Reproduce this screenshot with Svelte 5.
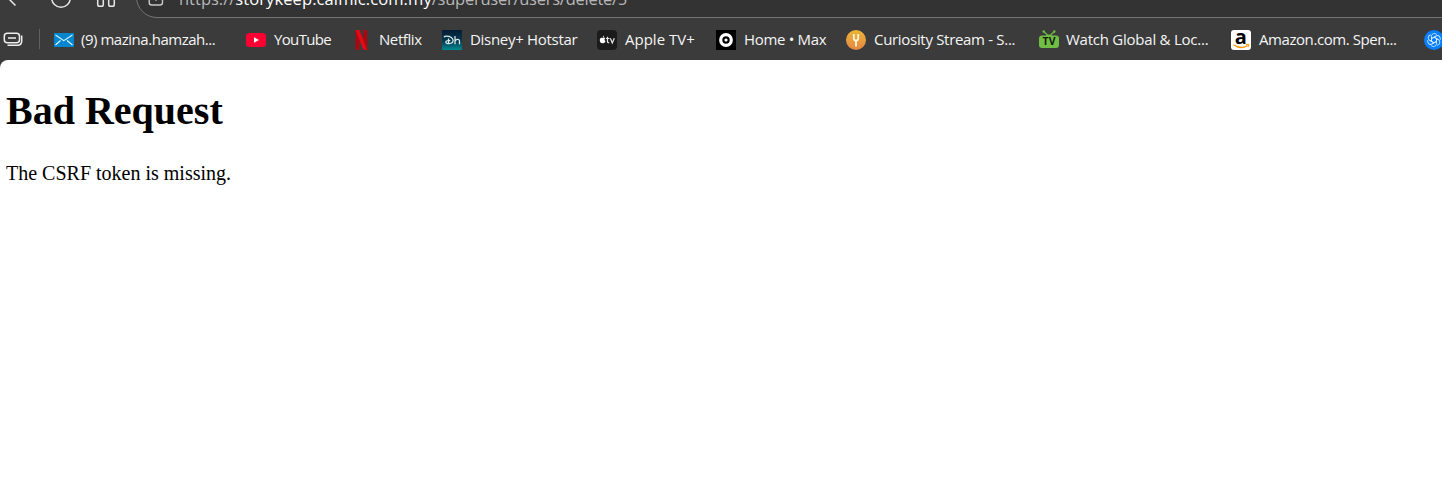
<script>
  const bookmarks = [
    { icon: 'mail', label: '(9) mazina.hamzah...', width: 192, gap: 7, spacing: -0.47 },
    { icon: 'youtube', label: 'YouTube', width: 106, gap: 8, spacing: -0.65 },
    { icon: 'netflix', label: 'Netflix', width: 90, gap: 7, spacing: -0.42 },
    { icon: 'disney', label: 'Disney+ Hotstar', width: 155, gap: 8, spacing: -0.3 },
    { icon: 'apple', label: 'Apple TV+', width: 119, gap: 8, spacing: 0 },
    { icon: 'max', label: 'Home • Max', width: 130, gap: 8, spacing: -0.32 },
    { icon: 'curiosity', label: 'Curiosity Stream - S...', width: 193, gap: 8, spacing: -0.31 },
    { icon: 'tv', label: 'Watch Global & Loc...', width: 192, gap: 7, spacing: -0.24 },
    { icon: 'amazon', label: 'Amazon.com. Spen...', width: 193, gap: 8, spacing: -0.43 },
    { icon: 'openai', label: '', width: 20, gap: 0, spacing: 0 }
  ];
</script>

<div class="browser">
  <div class="toolbar">
    <svg class="nav" width="136" height="18" viewBox="0 0 136 18" fill="none" stroke="#e6e6e6" stroke-width="1.5">
      <path d="M7 -3L15.5 5.5" />
      <circle cx="61" cy="-2" r="9.3" />
      <path d="M97.700 -4V4.500Q97.700 6.300 99.500 6.300H101.500Q103.300 6.300 103.300 4.500V-4M108.700 -4V4.500Q108.700 6.300 110.500 6.300H112.500Q114.300 6.300 114.300 4.500V-4" />
    </svg>
    <div class="address">
      <svg width="18" height="18" viewBox="0 0 18 18" fill="none" stroke="#c8c8c8" stroke-width="1.400">
        <path d="M2.200 -3V2.500Q2.200 5 4.700 5H13Q15.500 5 15.500 2.500V-3" />
        <path d="M8 -.2H10" />
      </svg>
      <div class="url"><span class="scheme">https://</span><span class="host">storykeep.calmic.com.my</span><span class="path">/superuser/users/delete/5</span></div>
    </div>
  </div>

  <nav class="bookmarks">
    <svg class="collections" width="20" height="18" viewBox="0 0 20 18" fill="none" stroke="#eee" stroke-width="1.500">
      <rect x="1.300" y="2.200" width="15.200" height="9.600" rx="3" />
      <path d="M5 7H13" />
      <path d="M4.500 14.200H14.500Q18.700 14.200 18.700 10V4.500" />
    </svg>
    <span class="divider"></span>
    {#each bookmarks as item}
      <div class="bookmark" style="width: {item.width}px; gap: {item.gap}px">
        <svg width="20" height="20" viewBox="0 0 20 20" class="favicon">
          {#if item.icon === 'mail'}
            <rect y="3" width="20" height="14" fill="#0086cf" />
            <path d="M1.500 5L9.800 10.700L18.500 5M1.500 15L6.500 10.500M18.500 15L13 10.500" fill="none" stroke="#e2f4ff" stroke-width="1.100" />
          {:else if item.icon === 'youtube'}
            <rect y="3" width="20" height="14" rx="3.500" fill="#ff0033" />
            <path d="M8 7.200L13 10L8 12.800Z" fill="#fff" />
          {:else if item.icon === 'netflix'}
            <path d="M3.500 0H7.500V19.600L3.500 20ZM11.200 0H15.200V20L11.200 19.600Z" fill="#a90812" />
            <path d="M3.500 0H7.500L15.200 20L11.200 19.600Z" fill="#e50914" />
          {:else if item.icon === 'disney'}
            <defs>
              <linearGradient id="ocean" x2="0" y2="1">
                <stop stop-color="#041b35" /><stop offset=".55" stop-color="#053b50" /><stop offset="1" stop-color="#008b93" />
              </linearGradient>
            </defs>
            <rect width="20" height="20" fill="url(#ocean)" />
            <path d="M2 7.300Q2.500 6.200 4.500 6.200C8.500 6.200 11.200 8 11.100 10.700C11 13.200 7.500 14.200 5 13.400C3 12.600 3.600 10.600 6 10.500L8.300 10.700M6.500 8.500V13.300M13 6V14.300M13 11.500C13.500 9 17.500 8.500 17.500 11V14.300" fill="none" stroke="#dce9ed" stroke-width="1.250" />
          {:else if item.icon === 'apple'}
            <rect width="20" height="20" rx="4" fill="#1b1b1b" />
            <path d="M5.600 8C6.900 7.100 7.900 7.600 8.200 8.300C7.200 9 7.300 10.500 8.500 11.100C7.800 13 7 13.600 5.700 12.900C4.600 13.500 3.600 12.900 3 11.400C2.200 9.200 3.500 6.900 5.600 8ZM5.700 7.300Q5.700 6 7.200 5.600Q7.200 7 5.700 7.300Z" fill="#fff" />
            <path d="M10.500 6.700V11.500Q10.500 13 12.200 12.700M9 8.500H12.400M13.300 8.300L15.300 12.900L17.300 8.300" fill="none" stroke="#e8e8e8" stroke-width="1.200" />
          {:else if item.icon === 'max'}
            <rect width="20" height="20" fill="#000" />
            <circle cx="10" cy="10" r="5.300" fill="none" stroke="#fff" stroke-width="3.200" />
            <circle cx="10" cy="10" r="1.600" fill="#fff" />
          {:else if item.icon === 'curiosity'}
            <defs>
              <linearGradient id="amber" x2="0" y2="1">
                <stop stop-color="#edb536" /><stop offset="1" stop-color="#e48743" />
              </linearGradient>
            </defs>
            <circle cx="10" cy="10" r="10" fill="url(#amber)" />
            <path d="M7.800 4V8.500Q7.800 10.500 10 10.500Q12.200 10.500 12.200 8.500V4M10 10V16.500" fill="none" stroke="#fff6e5" stroke-width="1.700" />
          {:else if item.icon === 'tv'}
            <path d="M4.700 1.500L10 6.500L15.500 1.500" fill="none" stroke="#70be44" stroke-width="1.200" />
            <circle cx="4.700" cy="1.500" r="1.200" fill="#70be44" /><circle cx="15.300" cy="1.500" r="1.200" fill="#70be44" />
            <path d="M6.500 6Q10 3 13.500 6Z" fill="#70be44" />
            <rect y="5.500" width="20" height="12.500" rx="3" fill="#70be44" />
            <text x="10" y="15.200" class="tv-mark">TV</text>
          {:else if item.icon === 'amazon'}
            <rect width="20" height="20" rx="3" fill="#fff" />
            <text x="9.800" y="13.800" class="a-mark">a</text>
            <path d="M2.500 14.700Q10 20 16.500 15.500" fill="none" stroke="#ff9900" stroke-width="1.400" />
            <path d="M14.800 14.500L18 14.300L17 17" fill="none" stroke="#ff9900" />
          {:else}
            <circle cx="10" cy="10" r="10" fill="#087fff" />
            <g fill="none" stroke="#d7eaff" stroke-width=".9">
              {#each [0, 60, 120, 180, 240, 300] as angle}
                <path transform="rotate({angle} 10 10)" d="M7.500 11.400V6.400C7.500 3.500 11 2.500 12.900 4.600M7.500 8.600L11.700 6.200" />
              {/each}
            </g>
          {/if}
        </svg>
        {#if item.label}
          <span class="label" style="letter-spacing: {item.spacing}px">{item.label}</span>
        {/if}
      </div>
    {/each}
  </nav>

  <main>
    <h1>Bad Request</h1>
    <p>The CSRF token is missing.</p>
  </main>
</div>

<style>
  :global(body) { margin: 0; overflow: hidden; background: #3b3b3b; }
  .browser { width: 1442px; height: 487px; overflow: hidden; display: flex; flex-direction: column; background: #3b3b3b; }
  .toolbar { height: 18px; flex: none; display: flex; overflow: hidden; }
  .nav { flex: none; }
  .address { box-sizing: border-box; height: 42px; width: 1330px; flex: none; margin-top: -24px; padding: 23px 0 0 10px; display: flex; border: 1px solid #757575; border-radius: 21px; background: #333; }
  .address svg { flex: none; }
  .url { margin: -13px 0 0 14px; font: 16.500px/24px "Open Sans", sans-serif; white-space: nowrap; color: #b8b8b8; letter-spacing: -.25px; }
  .scheme { letter-spacing: 0; }
  .host { color: #fff; letter-spacing: .1px; }
  .bookmarks { height: 42px; flex: none; display: flex; align-items: center; padding-left: 3px; box-sizing: border-box; }
  .collections { flex: none; margin-top: 2px; }
  .divider { width: 1px; height: 20px; margin: 0 14px 0 16px; background: #606060; flex: none; }
  .bookmark { display: flex; align-items: center; flex: none; height: 24px; }
  .favicon { flex: none; margin-top: 1px; }
  .label { font: 15px/20px "Open Sans", sans-serif; color: #f5f5f5; white-space: nowrap; }
  .tv-mark { font: bold 10.500px "Open Sans", sans-serif; text-anchor: middle; fill: #10200b; }
  .a-mark { font: bold 20px "Open Sans", sans-serif; text-anchor: middle; fill: #000; }
  main { flex: 1; background: #fff; border-top-left-radius: 8px; padding-left: 6px; font-family: "Liberation Serif", serif; color: #000; }
  h1 { margin: 27px 0 0; font-size: 40px; line-height: 48px; }
  p { margin: 27px 0 0; font-size: 20px; line-height: 23px; }
</style>
